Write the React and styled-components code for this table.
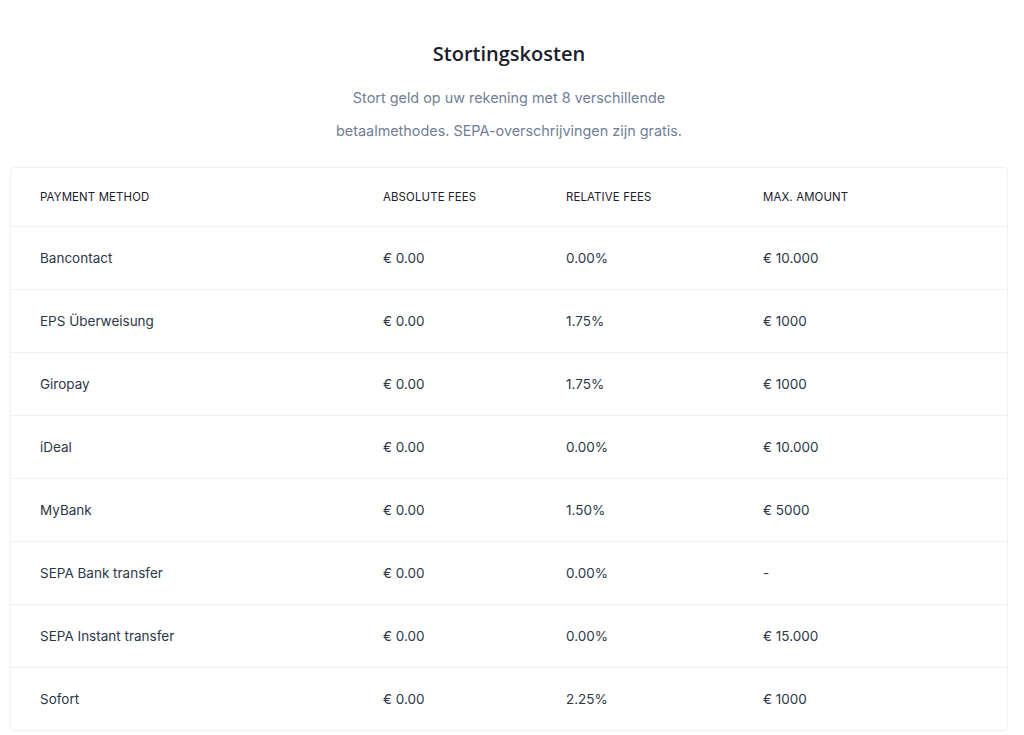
import React from 'react';
import styled, { createGlobalStyle } from 'styled-components';

const rows = [
  { method: 'Bancontact', absolute: '€ 0.00', relative: '0.00%', max: '€ 10.000' },
  { method: 'EPS Überweisung', absolute: '€ 0.00', relative: '1.75%', max: '€ 1000' },
  { method: 'Giropay', absolute: '€ 0.00', relative: '1.75%', max: '€ 1000' },
  { method: 'iDeal', absolute: '€ 0.00', relative: '0.00%', max: '€ 10.000' },
  { method: 'MyBank', absolute: '€ 0.00', relative: '1.50%', max: '€ 5000' },
  { method: 'SEPA Bank transfer', absolute: '€ 0.00', relative: '0.00%', max: '-' },
  { method: 'SEPA Instant transfer', absolute: '€ 0.00', relative: '0.00%', max: '€ 15.000' },
  { method: 'Sofort', absolute: '€ 0.00', relative: '2.25%', max: '€ 1000' },
];

const GlobalStyle = createGlobalStyle`
  body {
    margin: 0;
    background: #fff;
    font-family: Inter, "Noto Sans", sans-serif;
  }
`;

const Page = styled.div`
  padding: 40px 16px 0 10px;
`;

const Intro = styled.header`
  display: flex;
  flex-direction: column;
  align-items: center;
  margin-bottom: 20px;
`;

const Title = styled.h2`
  margin: 0 0 13px;
  font-family: "Open Sans", Inter, sans-serif;
  font-size: 20px;
  font-weight: 600;
  line-height: 28px;
  color: #1a202c;
`;

const Lead = styled.p`
  margin: 0;
  max-width: 360px;
  text-align: center;
  font-size: 14.4px;
  line-height: 33px;
  color: #718096;
`;

const Table = styled.div`
  border: 1px solid #edf2f7;
  border-radius: 4px;
  overflow: hidden;
`;

const Row = styled.div`
  display: grid;
  grid-template-columns: 343px 183px 197px 1fr;
  align-items: center;
  height: ${p => (p.$head ? 58 : 62)}px;
  padding-left: 29px;
  border-top: ${p => (p.$first ? 'none' : '1px solid #edf2f7')};
`;

const HeadCell = styled.div`
  font-size: 11.4px;
  font-weight: 400;
  text-transform: uppercase;
  color: #1a202c;
  letter-spacing: 0.15px;
`;

const Cell = styled.div`
  font-size: 13.5px;
  color: #2d3748;
`;

export default function App() {
  return (
    <>
      <GlobalStyle />
      <Page>
        <Intro>
          <Title>Stortingskosten</Title>
          <Lead>
            Stort geld op uw rekening met 8 verschillende betaalmethodes. SEPA-overschrijvingen zijn gratis.
          </Lead>
        </Intro>
        <Table>
          <Row $head $first>
            <HeadCell>Payment method</HeadCell>
            <HeadCell>Absolute fees</HeadCell>
            <HeadCell>Relative fees</HeadCell>
            <HeadCell>Max. amount</HeadCell>
          </Row>
          {rows.map(r => (
            <Row key={r.method}>
              <Cell>{r.method}</Cell>
              <Cell>{r.absolute}</Cell>
              <Cell>{r.relative}</Cell>
              <Cell>{r.max}</Cell>
            </Row>
          ))}
        </Table>
      </Page>
    </>
  );
}
